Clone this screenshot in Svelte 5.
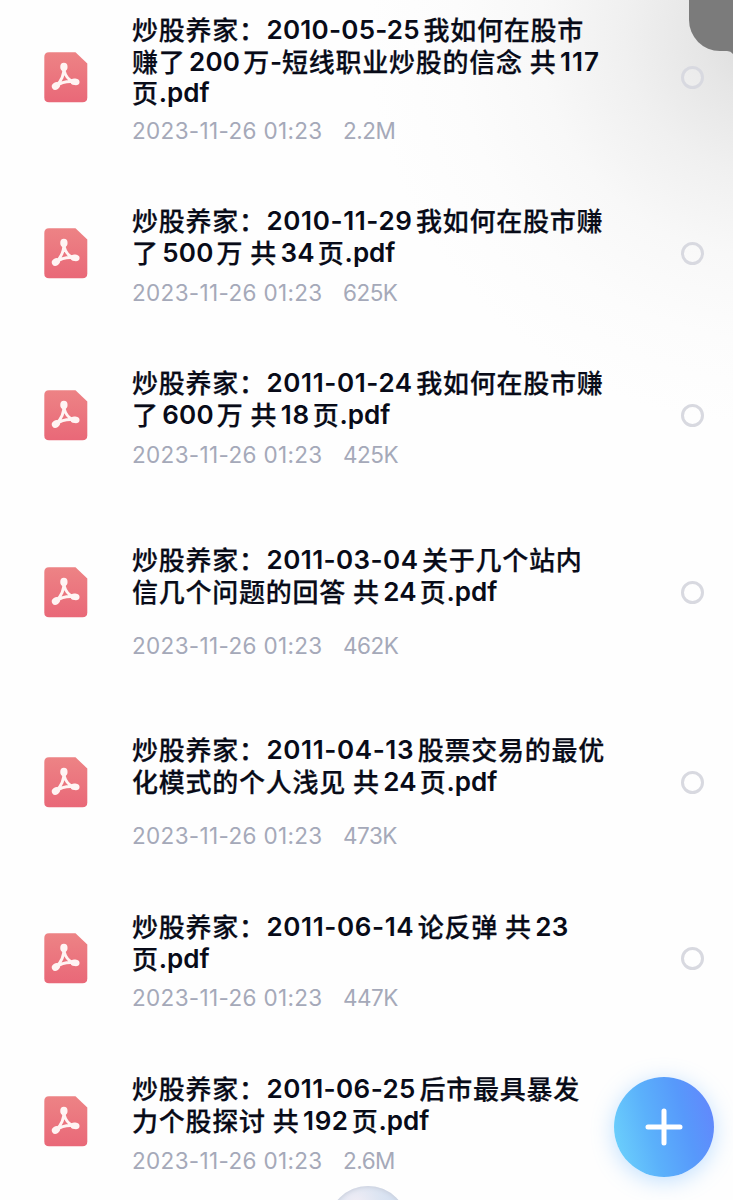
<script>
  const files = [
    { h: 191, icon: 37.5, gap: 10.5, size: '2.2M', lines: ['炒股养家：2010-05-25我如何在股市', '赚了200万-短线职业炒股的信念 共117', '页.pdf'] },
    { h: 162, icon: 22.5, gap: 13, size: '625K', lines: ['炒股养家：2010-11-29我如何在股市赚', '了500万 共34页.pdf'] },
    { h: 177, icon: 22.5, gap: 13, size: '425K', lines: ['炒股养家：2011-01-24我如何在股市赚', '了600万 共18页.pdf'] },
    { h: 190, icon: 22.5, gap: 26.5, size: '462K', lines: ['炒股养家：2011-03-04关于几个站内', '信几个问题的回答 共24页.pdf'] },
    { h: 177, icon: 22.5, gap: 26.5, size: '473K', lines: ['炒股养家：2011-04-13股票交易的最优', '化模式的个人浅见 共24页.pdf'] },
    { h: 162, icon: 22, gap: 12.4, size: '447K', lines: ['炒股养家：2011-06-14论反弹 共23', '页.pdf'] },
    { h: 127, icon: 22.5, gap: 13, size: '2.6M', lines: ['炒股养家：2011-06-25后市最具暴发', '力个股探讨 共192页.pdf'] }
  ];

  const split = (line) => line.match(/[\d][\d-]*|[.\w-]+| |[^\d\w. -]+/g);
  const kind = (t) => {
    if (t === ' ') return 'space';
    if (/^\d{4}-/.test(t)) return 'date';
    if (/^\d/.test(t)) return 'num';
    return /^[.\w-]+$/.test(t) ? 'latin' : 'han';
  };
  // The digit 1 is narrow, so runs with many of them are opened up slightly.
  const tracking = (t) => {
    if (!/^\d/.test(t)) return undefined;
    const ones = t.split('1').length - 1;
    return `${t.length > 4 ? 0.22 + (ones - 1) * 0.19 : 0.2 + ones * 0.4}px`;
  };
</script>

<main>
  <div class="list">
    {#each files as f}
      <article style="height:{f.h}px">
        <svg class="pdf" style="margin-top:{f.icon}px" width="44" height="51" viewBox="0 0 44 51">
          <defs>
            <linearGradient id="pdf-fill" x1="0" y1="0" x2="0" y2="1">
              <stop offset="0" stop-color="#ed8385" />
              <stop offset="1" stop-color="#e96878" />
            </linearGradient>
          </defs>
          <path d="M5 .3H31.5L43.3 11.5V45.5Q43.3 50.3 38.5 50.3H5Q.3 50.3 .3 45.5V5Q.3 .3 5 .3Z" fill="url(#pdf-fill)" />
          <g class="mark">
            <path d="M19.9 15C20 20 21.5 24.6 26 28L31 29.8C24 28.8 17.3 30.2 11.8 34.2C17 29.6 20.2 23 19.9 15Z" />
            <ellipse cx="19.9" cy="15" rx="2.2" ry="2.7" />
            <ellipse cx="11.9" cy="34" rx="2.8" ry="2.1" transform="rotate(-35 11.9 34)" />
            <ellipse cx="31" cy="29.8" rx="3.1" ry="1.9" transform="rotate(8 31 29.8)" />
          </g>
        </svg>
        <div class="info">
          <h2>
            {#each f.lines as line}
              <span class="line">{#each split(line) as t}<span class={kind(t)} style:letter-spacing={tracking(t)}>{t}</span>{/each}</span>
            {/each}
          </h2>
          <p style="margin-top:{f.gap}px"><span>2023-11-26 01:23</span><span class="size">{f.size}</span></p>
        </div>
        <span class="radio" style="margin-top:{f.icon + 14}px"></span>
      </article>
    {/each}
  </div>
  <div class="corner"></div>
  <svg class="tail" width="6" height="3" viewBox="0 0 6 3"><path d="M0 0H6V3Q4 .2 0 0Z" fill="#7b7b7b" /></svg>
  <div class="orb"></div>
  <button aria-label="+">
    <svg width="38" height="38" viewBox="0 0 38 38"><path d="M19 3V35M3 19H35" stroke="#fff" stroke-width="5" stroke-linecap="round" /></svg>
  </button>
</main>

<style>
  :global(body) { margin: 0; background: #fefefe; }
  main {
    position: relative;
    box-sizing: border-box;
    width: 733px;
    height: 1200px;
    padding-top: 14px;
    overflow: hidden;
    background: radial-gradient(ellipse 400px 390px at 768px 35px, #dadada 0%, #e6e6e6 17%, #f0f0f0 36%, #f8f8f8 57%, #fcfcfc 78%, #fefefe 100%);
    font-family: Inter, "Noto Sans CJK SC", sans-serif;
  }
  article { display: flex; align-items: flex-start; padding: 0 29px 0 44px; }
  .pdf { flex: none; }
  .mark { fill: #fff4f3; stroke: #fff4f3; stroke-width: 2.9; stroke-linejoin: round; }
  .mark path { fill: none; }
  .info { flex: 1; margin-left: 44px; }
  h2 { margin: 0; font-size: 26px; font-weight: 600; color: #080b18; }
  .line { display: flex; height: 31.5px; line-height: 31.5px; white-space: pre; }
  .han { margin-top: -1px; font-family: "Noto Sans CJK SC", sans-serif; font-weight: 500; letter-spacing: .75px; -webkit-text-stroke: .25px #080b18; }
  .han + .num { margin-left: 3.5px; }
  .han + .date { margin-left: .8px; }
  .date + .han { margin-left: 3.6px; }
  .num + .han { margin-left: 3px; }
  .space { width: 7px; }
  p { display: flex; gap: 20.5px; margin: 0; height: 24px; font-size: 22.5px; line-height: 24px; color: #a5a9b9; letter-spacing: .33px; white-space: pre; }
  .size { letter-spacing: -.5px; }
  .radio { flex: none; box-sizing: border-box; width: 23px; height: 23px; border: 3px solid #d8d9e0; border-radius: 50%; background: rgba(255, 255, 255, .2); }
  .corner { position: absolute; left: 689px; top: -40px; width: 90px; height: 91px; border-radius: 0 0 0 31px; background: #7b7b7b; }
  .tail { position: absolute; left: 727px; top: 51px; }
  .orb {
    position: absolute; left: 328px; top: 1185.5px; width: 80px; height: 80px; box-sizing: border-box; border-radius: 50%;
    background: radial-gradient(circle at 35% 22%, #f1edf5 0, #dde5f2 28%, #cfddf0 60%);
    box-shadow: inset 0 0 4px 1px #c9cedb;
  }
  button {
    position: absolute; left: 614px; top: 1077px; width: 100px; height: 100px; padding: 0;
    display: grid; place-items: center; border: 0; border-radius: 50%;
    background: linear-gradient(75deg, #6dd3fc 3%, #5bb1fb 38%, #5799fb 68%, #6386fc 96%);
    box-shadow: 0 4px 22px rgba(91, 174, 255, .38);
  }
</style>
